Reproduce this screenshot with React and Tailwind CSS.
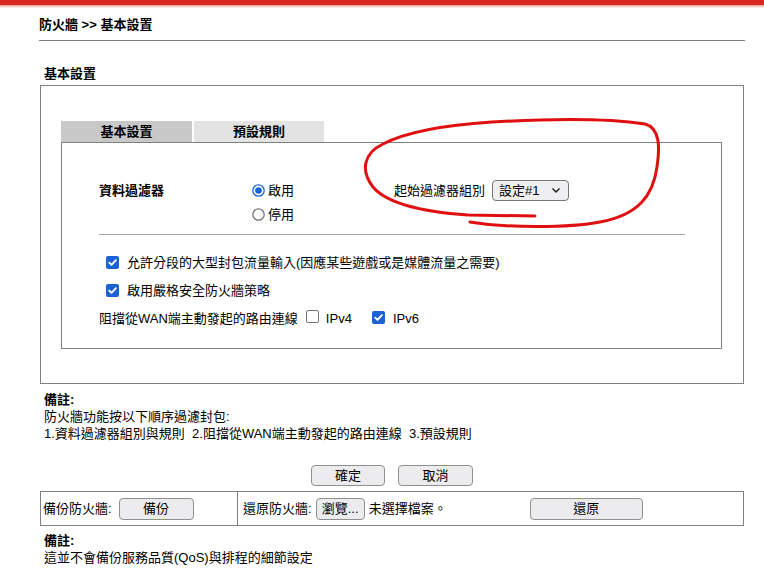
import React from "react";

function CheckBox({ checked }) {
  if (checked) {
    return (
      <span className="inline-flex h-[13px] w-[13px] shrink-0 items-center justify-center rounded-[2px] bg-[#1b63d0]">
        <svg width="11" height="11" viewBox="0 0 11 11">
          <path d="M2.2 5.6 L4.5 7.9 L8.9 3.2" fill="none" stroke="white" strokeWidth="1.8" strokeLinecap="round" strokeLinejoin="round" />
        </svg>
      </span>
    );
  }
  return <span className="inline-block h-[13px] w-[13px] shrink-0 rounded-[2px] border border-[#767676] bg-white" />;
}

function Radio({ checked }) {
  return (
    <svg width="13" height="13" viewBox="0 0 13 13" className="shrink-0">
      <circle cx="6.5" cy="6.5" r="5.7" fill="white" stroke={checked ? "#1b63d0" : "#767676"} strokeWidth="1.3" />
      {checked && <circle cx="6.5" cy="6.5" r="3.3" fill="#1b63d0" />}
    </svg>
  );
}

function Btn({ children, className }) {
  return (
    <button className={"flex items-center justify-center rounded-[4px] border border-[#8f8f8f] bg-[#ececee] text-[13px] leading-none text-black " + className}>
      {children}
    </button>
  );
}

export default function App() {
  return (
    <div className="relative h-[582px] w-[764px] overflow-hidden bg-white font-['Liberation_Sans','Noto_Sans_CJK_TC',sans-serif] text-[13px] leading-[17px] text-black">
      <div className="h-[5px] bg-[#d8281f]" />
      <div className="h-[3px] bg-gradient-to-b from-[#e59a96] to-white" />

      <div className="ml-[39px] w-[706px]">
        <div className="mt-[9px] h-[16px] font-bold leading-[16px]">防火牆 &gt;&gt; 基本設置</div>
        <div className="mt-[7px] h-px bg-[#808080]" />
        <div className="ml-[5px] mt-[25px] h-[16px] font-bold leading-[16px]">基本設置</div>

        <div className="ml-[1px] mt-[3px] h-[299px] w-[704px] border border-[#808080] pb-[34px] pl-[20px] pr-[21px] pt-[35px]">
          <div className="flex h-[21px] gap-[2px]">
            <div className="flex w-[131px] items-center justify-center bg-[#c8c8c8] font-bold">基本設置</div>
            <div className="flex w-[130px] items-center justify-center bg-[#e3e3e3] font-bold">預設規則</div>
          </div>
          <div className="h-[207px] border border-[#808080] pt-[35px]">
            <div className="flex pl-[37px]">
              <div className="flex h-[24px] w-[153px] items-center font-bold">資料過濾器</div>
              <div className="flex w-[142px] flex-col">
                <div className="flex h-[24px] items-center gap-[3px]">
                  <Radio checked />
                  <span>啟用</span>
                </div>
                <div className="flex h-[24px] items-center gap-[3px]">
                  <Radio />
                  <span>停用</span>
                </div>
              </div>
              <div className="flex h-[24px] items-center gap-[7px]">
                <span>起始過濾器組別</span>
                <div className="flex h-[21px] w-[77px] items-center justify-between rounded-[4px] border border-[#767676] bg-[#efeff1] pl-[6px] pr-[7px]">
                  <span>設定#1</span>
                  <svg width="10" height="7" viewBox="0 0 10 7">
                    <path d="M1.5 1.5 L5 5 L8.5 1.5" fill="none" stroke="#222" strokeWidth="1.5" />
                  </svg>
                </div>
              </div>
            </div>

            <div className="ml-[37px] mt-[8px] h-px w-[586px] bg-[#a0a0a0]" />

            <div className="mt-[13px] flex h-[28px] items-center gap-[8px] pl-[44px]">
              <CheckBox checked />
              <span>允許分段的大型封包流量輸入(因應某些遊戲或是媒體流量之需要)</span>
            </div>
            <div className="flex h-[28px] items-center gap-[8px] pl-[44px]">
              <CheckBox checked />
              <span>啟用嚴格安全防火牆策略</span>
            </div>
            <div className="flex h-[28px] items-center pl-[37px]">
              <span>阻擋從WAN端主動發起的路由連線</span>
              <span className="ml-[8px]"><CheckBox /></span>
              <span className="ml-[7px]">IPv4</span>
              <span className="ml-[20px]"><CheckBox checked /></span>
              <span className="ml-[8px]">IPv6</span>
            </div>
          </div>
        </div>

        <div className="ml-[5px] mt-[7px]">
          <div className="font-bold">備註:</div>
          <div>防火牆功能按以下順序過濾封包:</div>
          <div>1.資料過濾器組別與規則&nbsp;&nbsp;2.阻擋從WAN端主動發起的路由連線&nbsp;&nbsp;3.預設規則</div>
        </div>

        <div className="mt-[23px] flex justify-center gap-[13px]">
          <Btn className="h-[21px] w-[74px]">確定</Btn>
          <Btn className="h-[21px] w-[75px]">取消</Btn>
        </div>

        <div className="ml-[1px] mt-[5px] flex h-[35px] w-[704px] border border-[#808080]">
          <div className="flex w-[197px] items-center border-r border-[#808080] pl-[2px]">
            <span>備份防火牆:</span>
            <Btn className="ml-[7px] h-[22px] w-[75px]">備份</Btn>
          </div>
          <div className="flex flex-1 items-center pl-[5px]">
            <span>還原防火牆:</span>
            <Btn className="ml-[4px] h-[22px] w-[49px]">瀏覽...</Btn>
            <span className="ml-[4px]">未選擇檔案。</span>
            <Btn className="ml-[83px] h-[22px] w-[113px]">還原</Btn>
          </div>
        </div>

        <div className="ml-[5px] mt-[6px]">
          <div className="font-bold">備註:</div>
          <div>這並不會備份服務品質(QoS)與排程的細節設定</div>
        </div>
      </div>

      <svg className="pointer-events-none absolute left-0 top-0" width="764" height="582" viewBox="0 0 764 582">
        <path
          d="M535 216 L468 215 C425 212 388 205 373 187 C360 170 364 153 383 144 C408 131 445 125 492 122 C545 119 605 118 645 124 C660 128 660 147 657 167 C653 196 638 215 600 222 C570 228 505 228 470 222"
          fill="none"
          stroke="#e01010"
          strokeWidth="3"
          strokeLinecap="round"
          strokeLinejoin="round"
        />
      </svg>
    </div>
  );
}
